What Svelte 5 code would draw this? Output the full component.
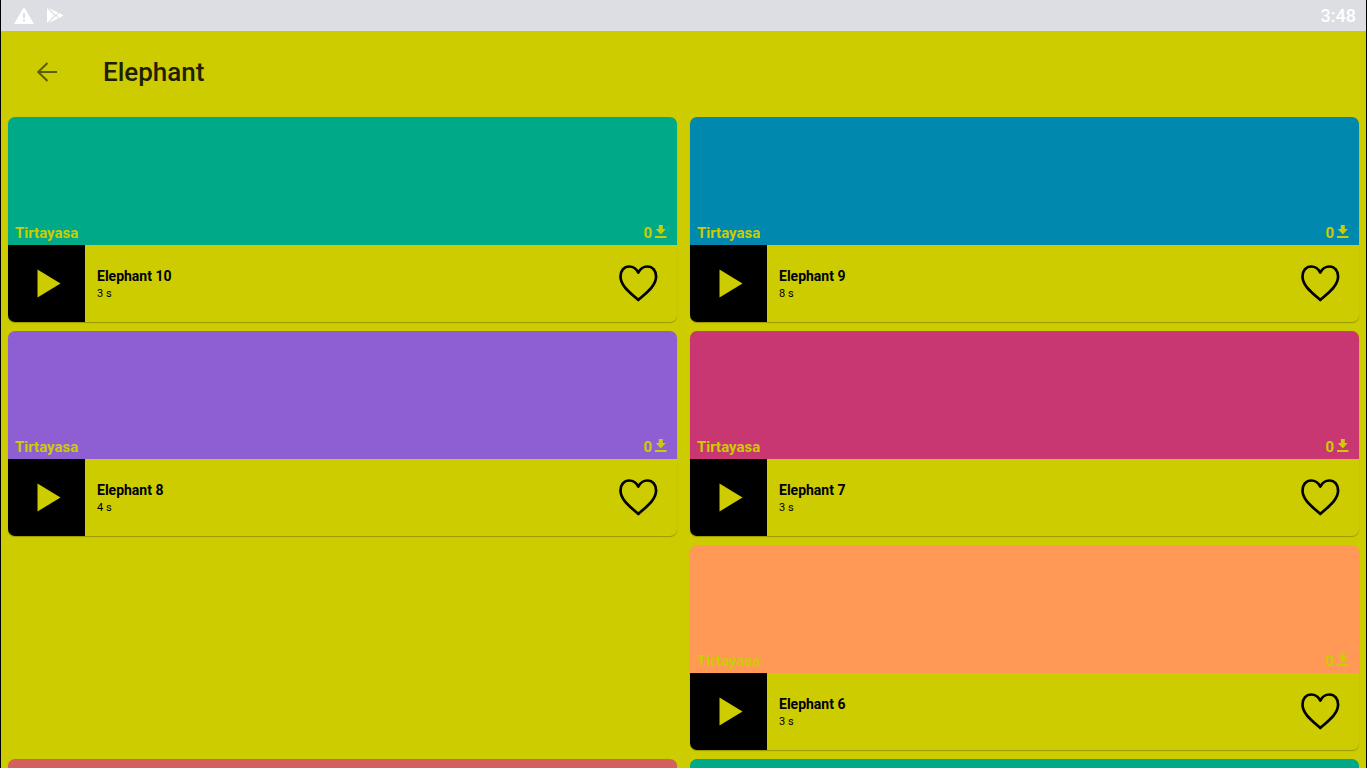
<script>
  const tracks = [
    { title: 'Elephant 10', length: '3 s', color: '#00aa88' },
    { title: 'Elephant 9', length: '8 s', color: '#0088ae' },
    { title: 'Elephant 8', length: '4 s', color: '#8d5fd3' },
    { title: 'Elephant 7', length: '3 s', color: '#c83771' },
    null,
    { title: 'Elephant 6', length: '3 s', color: '#ff9955' },
    { title: 'Elephant 5', length: '3 s', color: '#d35f5f' },
    { title: 'Elephant 4', length: '3 s', color: '#00aa88' },
  ];
</script>

<div class="screen">
  <div class="status">
    <svg width="20" height="18" viewBox="0 0 20 18" aria-hidden="true">
      <path fill="#fff" d="M10 0 20 17H0Z" />
      <path fill="#dcdee4" d="M9 6h2v5H9zM9 12.500h2v2H9z" />
    </svg>
    <svg width="18" height="16" viewBox="0 0 18 16" aria-hidden="true">
      <path fill="#fff" d="M1 0 8.300 7.500 1 15ZM2.500 0 12.500 4.800 9.800 7ZM2.500 15 12.500 10.200 9.800 8ZM13.200 5 17.500 7.500 13.200 10 10.800 7.500Z" />
    </svg>
    <time>3:48</time>
  </div>

  <header>
    <button class="back" aria-label="Back">
      <svg width="22" height="22" viewBox="0 0 22 22" fill="none" stroke="#5c5c00" stroke-width="2">
        <path d="M21 11H2.500M11.500 2 2.200 11 11.500 20" />
      </svg>
    </button>
    <h1>Elephant</h1>
  </header>

  <main>
    {#each tracks as track}
      {#if track}
        <article>
          <div class="cover" style:background={track.color}>
            <span>Tirtayasa</span>
            <span class="downloads">
              0
              <svg width="12" height="14" viewBox="0 0 12 14" aria-hidden="true">
                <path fill="currentColor" d="M3.800 0h4v4h3L5.800 9.500 0.800 4h3ZM0 11h11.500V13H0Z" />
              </svg>
            </span>
          </div>
          <div class="row">
            <button class="play" aria-label="Play {track.title}">
              <svg width="24" height="30" viewBox="0 0 24 30"><path fill="#cccc00" d="M0.500 0.500 23.500 14.500 0.500 28.500Z" /></svg>
            </button>
            <div class="info">
              <h2>{track.title}</h2>
              <p>{track.length}</p>
            </div>
            <button class="like" aria-label="Like {track.title}">
              <svg width="40" height="38" viewBox="0 0 40 38" fill="none" stroke="#000" stroke-width="2.700" stroke-linejoin="round">
                <path d="M20.300 7.500C18.300 3.800 15.300 1.500 11.300 1.500 5.800 1.500 2.500 6 2.500 11.500 2.500 20.500 11.300 27 20.300 35 29.300 27 38.100 20.500 38.100 11.500 38.100 6 34.800 1.500 29.300 1.500 25.300 1.500 22.300 3.800 20.300 7.500Z" />
              </svg>
            </button>
          </div>
        </article>
      {:else}
        <div></div>
      {/if}
    {/each}
  </main>
</div>

<style>
  :global(body) {
    margin: 0;
    background: #cccc00;
  }
  .screen {
    box-sizing: border-box;
    height: 100vh;
    overflow: hidden;
    border: solid #000;
    border-width: 0 1px;
    background: #cccc00;
    font-family: Roboto, sans-serif;
    color: #000;
  }
  svg {
    display: block;
  }
  button {
    display: flex;
    align-items: center;
    justify-content: center;
    padding: 0;
    border: 0;
    background: none;
  }
  h1, h2, p {
    margin: 0;
  }
  .status {
    display: flex;
    align-items: center;
    gap: 12px;
    height: 31px;
    padding: 0 10px 0 13px;
    background: #dcdee4;
    color: #fff;
  }
  time {
    margin-left: auto;
    font-size: 18px;
    font-weight: 500;
  }
  header {
    display: flex;
    align-items: center;
    gap: 34px;
    height: 82px;
    padding: 0 24px;
  }
  .back {
    width: 44px;
    height: 44px;
  }
  h1 {
    font-size: 26px;
    line-height: 32px;
    font-weight: 500;
    color: #1f1f00;
  }
  main {
    display: grid;
    grid-template-columns: 1fr 1fr;
    gap: 9px 13px;
    padding: 4px 7px;
  }
  article {
    overflow: hidden;
    border-radius: 7px;
    background: #cccc00;
    box-shadow: 0 1px 1px rgba(0, 0, 0, 0.25);
  }
  .cover {
    box-sizing: border-box;
    display: flex;
    align-items: flex-end;
    justify-content: space-between;
    height: 128px;
    padding: 0 10px 2px 7px;
    color: #cccc00;
    font-size: 15px;
    line-height: 20px;
    font-weight: 700;
  }
  .downloads {
    display: flex;
    align-items: center;
    gap: 3px;
  }
  .downloads svg {
    margin-bottom: 2px;
  }
  .row {
    display: flex;
    align-items: center;
    height: 77px;
    padding-right: 19px;
  }
  .play {
    width: 77px;
    height: 77px;
    padding-left: 4px;
    background: #000;
  }
  .info {
    flex: 1;
    padding: 2px 0 0 12px;
  }
  h2 {
    font-size: 14px;
    line-height: 18px;
    font-weight: 700;
  }
  p {
    font-size: 11px;
    line-height: 17px;
  }
</style>
